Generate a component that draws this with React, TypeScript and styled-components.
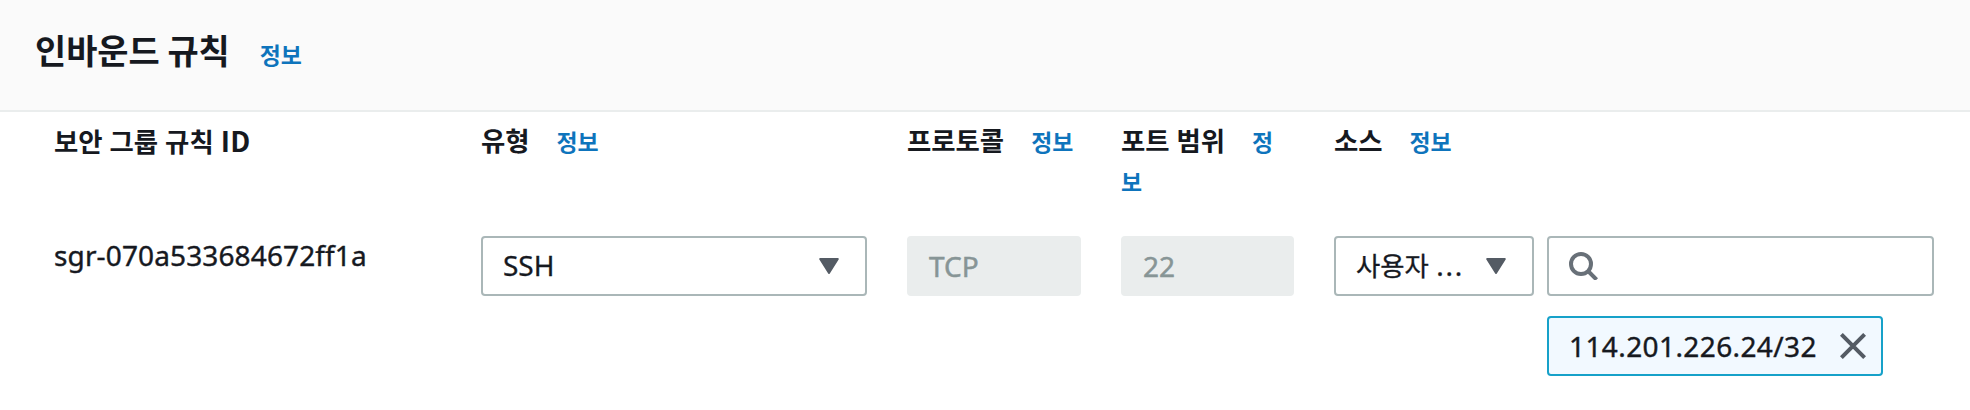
import React from "react";
import styled, { createGlobalStyle } from "styled-components";

const GlobalStyle = createGlobalStyle`
  * { box-sizing: border-box; }
  body {
    margin: 0;
    background: #fff;
    color: #16191f;
    font-family: "Noto Sans", "Noto Sans CJK KR", sans-serif;
    font-size: 28px;
    line-height: 40px;
  }
`;

const Panel = styled.section`
  min-height: 410px;
  background: #fff;
`;

const PanelHeader = styled.header`
  display: flex;
  align-items: baseline;
  height: 112px;
  padding: 30px 35px 0;
  background: #fafafa;
  border-bottom: 2px solid #eaeded;
`;

const Title = styled.h2`
  margin: 0 3px 0 0;
  font-family: "Noto Sans CJK KR", sans-serif;
  font-size: 33.9px;
  line-height: 40px;
  font-weight: 700;
`;

const Hangul = styled.span`
  font-family: "Noto Sans CJK KR", sans-serif;
  font-size: 26.4px;
`;

const InfoLink = styled.a`
  margin-left: 27px;
  color: #0e74bc;
  font-family: "Noto Sans CJK KR", sans-serif;
  font-size: 22.9px;
  font-weight: 700;
`;

const RuleGrid = styled.div`
  display: grid;
  grid-template-columns: 387px 386px 174px 173px 600px;
  column-gap: 40px;
  padding: 0 36px 0 54px;
`;

const ColumnHead = styled.div`
  height: 124px;
  padding: 9px 4px 0 0;
  font-family: "Noto Sans CJK KR", sans-serif;
  font-size: 26.4px;
  line-height: 38.5px;
  font-weight: 700;
  word-spacing: 1px;
  word-break: break-all;
`;

const Latin = styled.span`
  font-size: 28px;
  letter-spacing: 0.4px;
`;

const RuleId = styled.div`
  margin-top: -1px;
  letter-spacing: 0.13px;
  -webkit-text-stroke: 0.4px currentColor;
`;

const Field = styled.div<{ $disabled?: boolean }>`
  display: flex;
  align-items: center;
  justify-content: space-between;
  height: 60px;
  padding: 0 26px 0 20px;
  border: 2px solid ${(p) => (p.$disabled ? "#eaeded" : "#aab7b8")};
  border-radius: 4px;
  background: ${(p) => (p.$disabled ? "#eaeded" : "#fff")};
  color: ${(p) => (p.$disabled ? "#879596" : "#16191f")};
  white-space: nowrap;
  -webkit-text-stroke: ${(p) => (p.$disabled ? "0.5px" : "0.3px")} currentColor;
`;

const FieldValue = styled.span`
  padding-bottom: 2px;
`;

const Ellipsis = styled.span`
  letter-spacing: 1.8px;
`;

const SourceCell = styled.div`
  display: grid;
  grid-template-columns: 200px 387px;
  column-gap: 13px;
  row-gap: 20px;
`;

const Token = styled.div`
  grid-column: 2;
  display: flex;
  align-items: center;
  justify-content: space-between;
  width: 336px;
  height: 60px;
  padding: 0 15px 0 20px;
  border: 2px solid #16a1c9;
  border-radius: 4px;
  background: #f2f9ff;
  letter-spacing: 0.4px;
  -webkit-text-stroke: 0.4px currentColor;
`;

const Caret = () => (
  <svg width="20" height="16" viewBox="0 0 20 16" aria-hidden="true">
    <path d="M1.2 1h17.6L10 15z" fill="#545b64" stroke="#545b64" strokeWidth="2" strokeLinejoin="round" />
  </svg>
);

const SearchIcon = () => (
  <svg width="30" height="28" viewBox="0 0 30 28" fill="none" stroke="#687078" strokeWidth="4" aria-hidden="true">
    <circle cx="12" cy="12" r="10" />
    <path d="M19 19l8.6 8.6" />
  </svg>
);

const CloseIcon = () => (
  <svg width="26" height="26" viewBox="0 0 26 26" fill="none" stroke="#545b64" strokeWidth="4" aria-hidden="true">
    <path d="M1.4 1.4l23.2 23.2M24.6 1.4L1.4 24.6" />
  </svg>
);

const columns = ["유형", "프로토콜", "포트 범위", "소스"];

export default function App() {
  return (
    <>
      <GlobalStyle />
      <Panel>
        <PanelHeader>
          <Title>인바운드 규칙</Title>
          <InfoLink>정보</InfoLink>
        </PanelHeader>
        <RuleGrid>
          <ColumnHead>
            보안 그룹 규칙 <Latin>ID</Latin>
          </ColumnHead>
          {columns.map((label) => (
            <ColumnHead key={label}>
              {label}
              <InfoLink>정보</InfoLink>
            </ColumnHead>
          ))}
          <RuleId>sgr-070a533684672ff1a</RuleId>
          <Field>
            <FieldValue>SSH</FieldValue>
            <Caret />
          </Field>
          <Field $disabled>TCP</Field>
          <Field $disabled>22</Field>
          <SourceCell>
            <Field>
              <FieldValue>
                <Hangul>사용자</Hangul> <Ellipsis>...</Ellipsis>
              </FieldValue>
              <Caret />
            </Field>
            <Field>
              <SearchIcon />
            </Field>
            <Token>
              114.201.226.24/32
              <CloseIcon />
            </Token>
          </SourceCell>
        </RuleGrid>
      </Panel>
    </>
  );
}
